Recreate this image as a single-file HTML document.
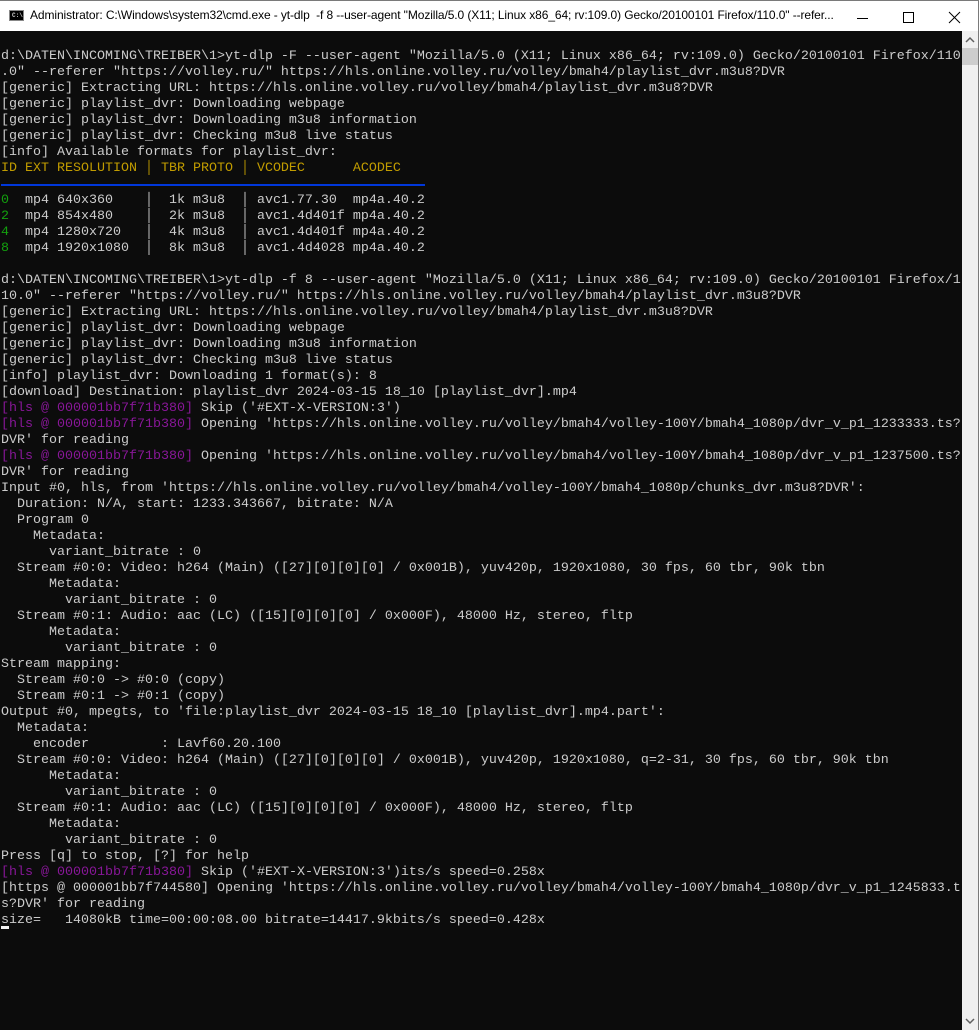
<!DOCTYPE html>
<html><head><meta charset="utf-8"><style>
html,body{margin:0;padding:0;width:979px;height:1030px;overflow:hidden;background:#0c0c0c;}
#title{position:absolute;left:0;top:0;width:978px;height:30px;background:#fff;border-top:1px solid #7a7a7a;border-right:1px solid #7a7a7a;}
#title .t{position:absolute;left:30px;top:7px;font:12px "Liberation Sans",sans-serif;color:#000;white-space:nowrap;letter-spacing:-0.1px;}
#icon{position:absolute;left:9px;top:9px;width:15px;height:11px;background:#000;border:1px solid #888;box-sizing:border-box;}
#icon span{position:absolute;left:2px;top:1px;font:bold 6px "Liberation Mono",monospace;color:#ccc;}
#term{position:absolute;left:0;top:31px;width:962px;height:999px;background:#0c0c0c;}
pre{margin:0;padding:18px 0 0 1px;font:13.333px/16px "Liberation Mono","DejaVu Sans Mono",monospace;color:#cccccc;white-space:pre;}
.y{color:#c19c00}.g{color:#13a10e}.p{color:#881798}
.bl{display:inline-block;width:424px;height:16px;vertical-align:top;position:relative}
.bl:after{content:"";position:absolute;left:0;right:0;top:7px;height:2px;background:#0037da}
#sb{position:absolute;left:962px;top:31px;width:16px;height:999px;background:#f0f0f0;border-right:1px solid #7a7a7a;}
#thumb{position:absolute;left:0;top:17px;width:16px;height:17px;background:#cdcdcd;}
.cur{position:absolute;left:1px;width:8px;height:3px;background:#f2f2f2;}
</style></head><body>
<div id="title"><div id="icon"><span>C:\</span></div><div class="t">Administrator: C:\Windows\system32\cmd.exe - yt-dlp &nbsp;-f 8 --user-agent "Mozilla/5.0 (X11; Linux x86_64; rv:109.0) Gecko/20100101 Firefox/110.0" --refer...</div>
<svg style="position:absolute;left:855px;top:10px" width="120" height="14"><path d="M2 7.5H13" stroke="#000" stroke-width="1"/><rect x="48.5" y="1.5" width="10" height="10" fill="none" stroke="#000"/><path d="M94 1L105 12M105 1L94 12" stroke="#000" stroke-width="1"/></svg>
</div>
<div id="term"><pre>d:\DATEN\INCOMING\TREIBER\1&gt;yt-dlp -F --user-agent "Mozilla/5.0 (X11; Linux x86_64; rv:109.0) Gecko/20100101 Firefox/110
.0" --referer "https://volley.ru/" https://hls.online.volley.ru/volley/bmah4/playlist_dvr.m3u8?DVR
[generic] Extracting URL: https://hls.online.volley.ru/volley/bmah4/playlist_dvr.m3u8?DVR
[generic] playlist_dvr: Downloading webpage
[generic] playlist_dvr: Downloading m3u8 information
[generic] playlist_dvr: Checking m3u8 live status
[info] Available formats for playlist_dvr:
<span class="y">ID EXT RESOLUTION │ TBR PROTO │ VCODEC      ACODEC</span>
<span class="bl"></span>
<span class="g">0</span>  mp4 640x360    │  1k m3u8  │ avc1.77.30  mp4a.40.2
<span class="g">2</span>  mp4 854x480    │  2k m3u8  │ avc1.4d401f mp4a.40.2
<span class="g">4</span>  mp4 1280x720   │  4k m3u8  │ avc1.4d401f mp4a.40.2
<span class="g">8</span>  mp4 1920x1080  │  8k m3u8  │ avc1.4d4028 mp4a.40.2

d:\DATEN\INCOMING\TREIBER\1&gt;yt-dlp -f 8 --user-agent "Mozilla/5.0 (X11; Linux x86_64; rv:109.0) Gecko/20100101 Firefox/1
10.0" --referer "https://volley.ru/" https://hls.online.volley.ru/volley/bmah4/playlist_dvr.m3u8?DVR
[generic] Extracting URL: https://hls.online.volley.ru/volley/bmah4/playlist_dvr.m3u8?DVR
[generic] playlist_dvr: Downloading webpage
[generic] playlist_dvr: Downloading m3u8 information
[generic] playlist_dvr: Checking m3u8 live status
[info] playlist_dvr: Downloading 1 format(s): 8
[download] Destination: playlist_dvr 2024-03-15 18_10 [playlist_dvr].mp4
<span class="p">[hls @ 000001bb7f71b380]</span> Skip ('#EXT-X-VERSION:3')
<span class="p">[hls @ 000001bb7f71b380]</span> Opening 'https://hls.online.volley.ru/volley/bmah4/volley-100Y/bmah4_1080p/dvr_v_p1_1233333.ts?
DVR' for reading
<span class="p">[hls @ 000001bb7f71b380]</span> Opening 'https://hls.online.volley.ru/volley/bmah4/volley-100Y/bmah4_1080p/dvr_v_p1_1237500.ts?
DVR' for reading
Input #0, hls, from 'https://hls.online.volley.ru/volley/bmah4/volley-100Y/bmah4_1080p/chunks_dvr.m3u8?DVR':
  Duration: N/A, start: 1233.343667, bitrate: N/A
  Program 0
    Metadata:
      variant_bitrate : 0
  Stream #0:0: Video: h264 (Main) ([27][0][0][0] / 0x001B), yuv420p, 1920x1080, 30 fps, 60 tbr, 90k tbn
      Metadata:
        variant_bitrate : 0
  Stream #0:1: Audio: aac (LC) ([15][0][0][0] / 0x000F), 48000 Hz, stereo, fltp
      Metadata:
        variant_bitrate : 0
Stream mapping:
  Stream #0:0 -&gt; #0:0 (copy)
  Stream #0:1 -&gt; #0:1 (copy)
Output #0, mpegts, to 'file:playlist_dvr 2024-03-15 18_10 [playlist_dvr].mp4.part':
  Metadata:
    encoder         : Lavf60.20.100
  Stream #0:0: Video: h264 (Main) ([27][0][0][0] / 0x001B), yuv420p, 1920x1080, q=2-31, 30 fps, 60 tbr, 90k tbn
      Metadata:
        variant_bitrate : 0
  Stream #0:1: Audio: aac (LC) ([15][0][0][0] / 0x000F), 48000 Hz, stereo, fltp
      Metadata:
        variant_bitrate : 0
Press [q] to stop, [?] for help
<span class="p">[hls @ 000001bb7f71b380]</span> Skip ('#EXT-X-VERSION:3')its/s speed=0.258x
[https @ 000001bb7f744580] Opening 'https://hls.online.volley.ru/volley/bmah4/volley-100Y/bmah4_1080p/dvr_v_p1_1245833.t
s?DVR' for reading
size=   14080kB time=00:00:08.00 bitrate=14417.9kbits/s speed=0.428x</pre>
<div class="cur" style="top:895px"></div>
</div>
<div id="sb"><div id="thumb"></div>
<svg style="position:absolute;left:3px;top:5px" width="10" height="8"><path d="M1 6L5 2L9 6" fill="none" stroke="#606060" stroke-width="1.5"/></svg>
<svg style="position:absolute;left:3px;top:986px" width="10" height="8"><path d="M1 2L5 6L9 2" fill="none" stroke="#606060" stroke-width="1.5"/></svg>
</div>
</body></html>
